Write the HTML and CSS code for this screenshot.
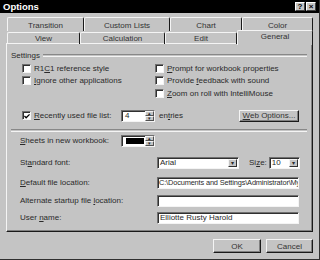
FILE: index.html
```html
<!DOCTYPE html>
<html lang="en">
<head>
    <meta charset="UTF-8">
    <title>Options</title>
    <link rel="stylesheet" href="styles.css">
</head>
<body>
    <div class="window">
        <!-- Title bar -->
        <div class="titlebar">
            <span class="title">Options</span>
            <div class="title-buttons">
                <span class="tbtn">?</span>
                <span class="tbtn">&#215;</span>
            </div>
        </div>

        <!-- Tabs -->
        <div class="tabs">
            <div class="tab-row back-row">
                <div class="tab tab-transition">Transition</div>
                <div class="tab tab-custom">Custom Lists</div>
                <div class="tab tab-chart">Chart</div>
                <div class="tab tab-color">Color</div>
            </div>
            <div class="tab-row front-row">
                <div class="tab tab-view">View</div>
                <div class="tab tab-calc">Calculation</div>
                <div class="tab tab-edit">Edit</div>
                <div class="tab tab-general active">General</div>
            </div>
        </div>

        <!-- Tab page -->
        <div class="panel">
            <div class="group-title">
                <span>Settings</span>
                <div class="etched"></div>
            </div>

            <div class="checks">
                <label class="check"><span class="box"></span><span>R1<u>C</u>1 reference style</span></label>
                <label class="check"><span class="box"></span><span><u>P</u>rompt for workbook properties</span></label>
                <label class="check"><span class="box"></span><span><u>I</u>gnore other applications</span></label>
                <label class="check"><span class="box"></span><span>Provide <u>f</u>eedback with sound</span></label>
                <span></span>
                <label class="check"><span class="box"></span><span><u>Z</u>oom on roll with IntelliMouse</span></label>
            </div>

            <div class="recent-row">
                <label class="check recent-label">
                    <span class="box">
                        <svg width="7" height="7" viewBox="0 0 7 7"><path d="M0.5 3 L2.5 5 L6.5 1" fill="none" stroke="#000" stroke-width="1.5"/></svg>
                    </span>
                    <span><u>R</u>ecently used file list:</span>
                </label>
                <div class="spin">
                    <span class="spin-value">4</span>
                    <span class="spin-arrows"><span>&#9652;</span><span>&#9662;</span></span>
                </div>
                <span class="entries">en<u>t</u>ries</span>
                <button class="btn web-btn"><u>W</u>eb Options...</button>
            </div>

            <div class="etched separator"></div>

            <div class="field-row sheets-row">
                <span class="field-label sheets-label"><u>S</u>heets in new workbook:</span>
                <div class="spin">
                    <span class="spin-value selected"></span>
                    <span class="spin-arrows"><span>&#9652;</span><span>&#9662;</span></span>
                </div>
            </div>

            <div class="field-row font-row">
                <span class="field-label">St<u>a</u>ndard font:</span>
                <div class="select font-select">
                    <span class="select-value">Arial</span>
                    <span class="drop">&#9662;</span>
                </div>
                <span class="size-label">Si<u>z</u>e:</span>
                <div class="select size-select">
                    <span class="select-value">10</span>
                    <span class="drop">&#9662;</span>
                </div>
            </div>

            <div class="field-row path-row">
                <span class="field-label"><u>D</u>efault file location:</span>
                <div class="textbox path-box">C:\Documents and Settings\Administrator\My</div>
            </div>

            <div class="field-row alt-row">
                <span class="field-label">Alternate startup file <u>l</u>ocation:</span>
                <div class="textbox"></div>
            </div>

            <div class="field-row user-row">
                <span class="field-label">User <u>n</u>ame:</span>
                <div class="textbox">Elliotte Rusty Harold</div>
            </div>
        </div>

        <!-- Dialog buttons -->
        <div class="dialog-buttons">
            <button class="btn ok-btn">OK</button>
            <button class="btn cancel-btn">Cancel</button>
        </div>
    </div>
</body>
</html>
```

FILE: styles.css
```css
body {
    margin: 0;
    font-family: 'Liberation Sans', Arial, sans-serif;
    font-size: 8px;
    color: #2a2a2a;
}
.window {
    width: 320px;
    height: 260px;
    box-sizing: border-box;
    background: #c4c4c4;
    border-right: 1px solid #303030;
    border-bottom: 1px solid #303030;
    overflow: hidden;
}
.titlebar {
    height: 13px;
    background: #000;
    color: #fff;
    display: flex;
    align-items: center;
    justify-content: space-between;
    padding: 0 3px;
}
.title {
    font-weight: bold;
    font-size: 9.5px;
}
.title-buttons {
    display: flex;
    gap: 1px;
}
.tbtn {
    width: 10px;
    height: 9px;
    box-sizing: border-box;
    background: #c4c4c4;
    color: #000;
    border-top: 1px solid #fff;
    border-left: 1px solid #fff;
    border-right: 1px solid #404040;
    border-bottom: 1px solid #404040;
    font-size: 8px;
    font-weight: bold;
    line-height: 7px;
    text-align: center;
}

/* tabs */
.tabs {
    margin-top: 4px;
    padding-left: 7px;
}
.tab-row {
    display: flex;
}
.back-row {
    height: 14px;
}
.front-row {
    height: 12px;
    margin-top: 1px;
}
.tab {
    box-sizing: border-box;
    border-top: 1px solid #f4f4f4;
    border-left: 1px solid #f4f4f4;
    border-right: 1px solid #1a1a1a;
    border-radius: 2px 2px 0 0;
    text-align: center;
    color: #333;
}
.back-row .tab {
    line-height: 15px;
}
.front-row .tab {
    line-height: 12px;
}
.tab-transition { width: 77px; }
.tab-custom { width: 86px; }
.tab-chart { width: 72px; }
.tab-color { width: 71px; }
.tab-view { width: 73px; }
.tab-calc { width: 85px; }
.tab-edit { width: 72px; }
.tab-general { width: 76px; }
.tab.active {
    position: relative;
    z-index: 1;
    height: 15px;
    margin-top: -2px;
    background: #c4c4c4;
    line-height: 11px;
}

/* page */
.panel {
    margin: -1px 6px 0 6px;
    height: 189px;
    box-sizing: border-box;
    border-top: 1px solid #f4f4f4;
    border-left: 1px solid #f4f4f4;
    border-right: 1px solid #1a1a1a;
    border-bottom: 1px solid #1a1a1a;
    box-shadow: inset -1px -1px 0 #808080;
}
.group-title {
    display: flex;
    align-items: center;
    gap: 3px;
    margin: 7px 5px 0 4px;
    height: 9px;
}
.etched {
    flex: 1;
    height: 1px;
    border-top: 1px solid #888;
    border-bottom: 1px solid #f4f4f4;
}
.checks {
    display: grid;
    grid-template-columns: 133px 1fr;
    grid-auto-rows: 12.5px;
    margin: 2px 0 0 15px;
}
.check {
    display: flex;
    align-items: center;
    gap: 3px;
    white-space: nowrap;
}
.box {
    width: 9px;
    height: 9px;
    box-sizing: border-box;
    background: #fff;
    border-top: 1px solid #707070;
    border-left: 1px solid #707070;
    border-right: 1px solid #f4f4f4;
    border-bottom: 1px solid #f4f4f4;
    box-shadow: inset 1px 1px 0 #303030;
    display: flex;
    align-items: center;
    justify-content: center;
}
.box svg {
    margin: 1px 0 0 1px;
}
.recent-row {
    display: flex;
    align-items: center;
    height: 12px;
    margin: 10px 0 0 15px;
}
.recent-label {
    width: 99px;
}
.spin {
    width: 34px;
    height: 12px;
    box-sizing: border-box;
    background: #fff;
    border-top: 1px solid #707070;
    border-left: 1px solid #707070;
    border-right: 1px solid #f4f4f4;
    border-bottom: 1px solid #f4f4f4;
    box-shadow: inset 1px 1px 0 #303030;
    display: flex;
}
.spin-value {
    flex: 1;
    padding-left: 3px;
    line-height: 10px;
}
.spin-value.selected {
    background: #000;
    margin: 2px 1px 2px 3px;
    padding: 0;
    border-left: 1px solid #fff;
}
.spin-arrows {
    width: 9px;
    display: flex;
    flex-direction: column;
}
.spin-arrows span {
    flex: 1;
    background: #c4c4c4;
    border-top: 1px solid #f4f4f4;
    border-left: 1px solid #f4f4f4;
    border-right: 1px solid #505050;
    border-bottom: 1px solid #505050;
    font-size: 5px;
    line-height: 3px;
    text-align: center;
    overflow: hidden;
}
.entries {
    margin-left: 4px;
    width: 80px;
}
.btn {
    box-sizing: border-box;
    font-family: inherit;
    font-size: 8px;
    color: #333;
    background: #c4c4c4;
    padding: 0;
    border-top: 1px solid #f4f4f4;
    border-left: 1px solid #f4f4f4;
    border-right: 1px solid #1a1a1a;
    border-bottom: 1px solid #1a1a1a;
    box-shadow: inset -1px -1px 0 #808080;
}
.web-btn {
    width: 60px;
    height: 12px;
}
.separator {
    flex: none;
    margin: 7px 5px 0 4px;
}

/* fields */
.field-row {
    display: flex;
    align-items: center;
    height: 12px;
    margin-left: 13px;
}
.sheets-row {
    margin-top: 3px;
}
.font-row {
    margin-top: 10px;
}
.path-row {
    margin-top: 8px;
}
.alt-row {
    margin-top: 6px;
}
.user-row {
    margin-top: 5px;
}
.field-label {
    width: 137px;
    white-space: nowrap;
}
.sheets-label {
    width: 101px;
}
.textbox, .select {
    height: 12px;
    box-sizing: border-box;
    background: #fff;
    border-top: 1px solid #707070;
    border-left: 1px solid #707070;
    border-right: 1px solid #f4f4f4;
    border-bottom: 1px solid #f4f4f4;
    box-shadow: inset 1px 1px 0 #303030;
    line-height: 10px;
    padding-left: 2px;
    white-space: nowrap;
    overflow: hidden;
}
.textbox {
    width: 142px;
}
.path-box {
    font-size: 7.4px;
    letter-spacing: -0.15px;
    padding-left: 1px;
}
.select {
    display: flex;
    padding-right: 1px;
}
.select-value {
    flex: 1;
}
.font-select {
    width: 82px;
}
.size-select {
    width: 31px;
}
.drop {
    width: 9px;
    margin: 1px 0;
    box-sizing: border-box;
    background: #c4c4c4;
    border-top: 1px solid #f4f4f4;
    border-left: 1px solid #f4f4f4;
    border-right: 1px solid #303030;
    border-bottom: 1px solid #303030;
    font-size: 6px;
    line-height: 7px;
    text-align: center;
}
.size-label {
    margin: 0 2px 0 10px;
    white-space: nowrap;
}
.dialog-buttons {
    display: flex;
    justify-content: flex-end;
    gap: 5px;
    margin: 7px 6px 0 0;
}
.ok-btn {
    width: 48px;
    height: 14px;
}
.cancel-btn {
    width: 47px;
    height: 14px;
}
```
